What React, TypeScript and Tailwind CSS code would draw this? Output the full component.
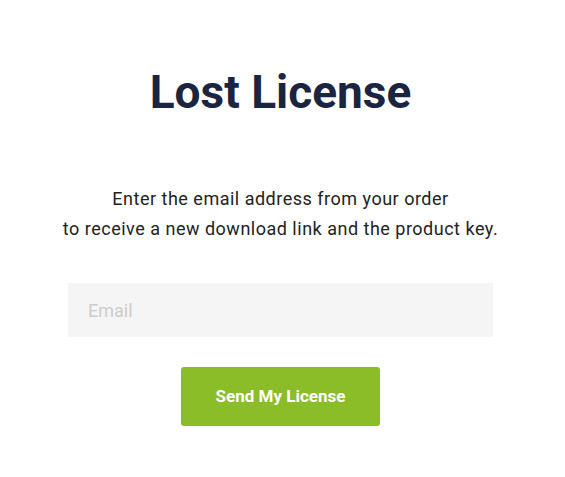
import React from 'react';

export default function App() {
  const [email, setEmail] = React.useState('');

  return (
    <div className="min-h-[477px] bg-white pr-[4px] font-['Roboto',sans-serif]">
      <div className="flex flex-col items-center pt-[63px]">
        <h1 className="text-[46px] font-bold leading-[58px] text-[#1b2440]">
          Lost License
        </h1>

        <p className="mt-[63px] text-center text-[18px] leading-[30px] tracking-[0.5px] text-[#222]">
          Enter the email address from your order
          <br />
          to receive a new download link and the product key.
        </p>

        <input
          type="email"
          value={email}
          onChange={e => setEmail(e.target.value)}
          placeholder="Email"
          className="mt-[39px] h-[54px] w-[425px] bg-[#f5f5f5] px-[20px] text-[18px] text-[#333] outline-none placeholder:text-[#cccccc]"
        />

        <button className="mt-[30px] h-[59px] w-[199px] rounded-[3px] bg-[#8abd28] text-[17px] font-bold text-white">
          Send My License
        </button>
      </div>
    </div>
  );
}
